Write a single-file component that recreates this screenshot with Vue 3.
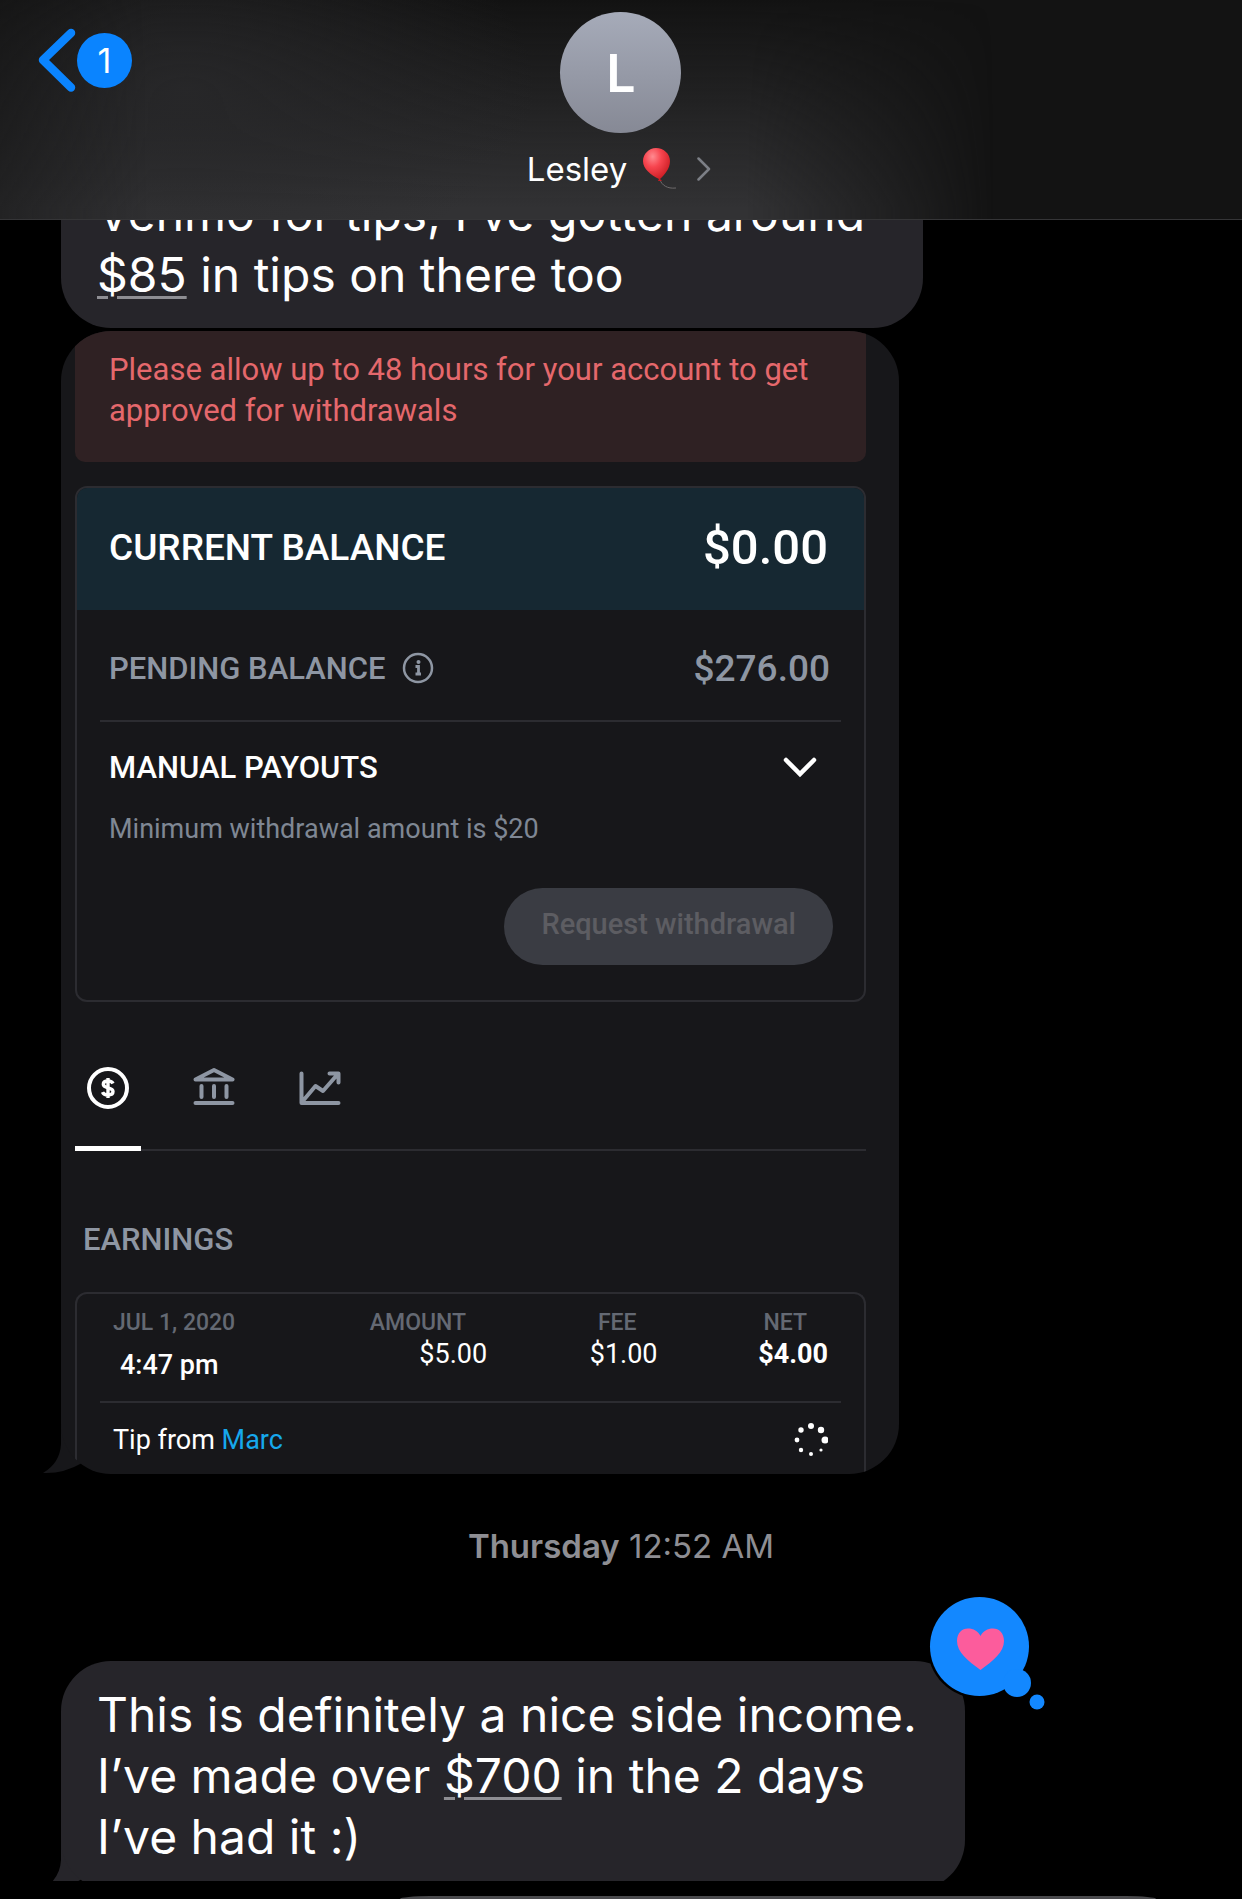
<script setup>
import { ref } from 'vue'

const activeTab = ref('earnings')

const spinnerDots = [
  { x: 17, y: 3, r: 3 },
  { x: 27, y: 7, r: 3.2 },
  { x: 31, y: 17, r: 3.5 },
  { x: 27, y: 27, r: 1.6 },
  { x: 17, y: 31, r: 2 },
  { x: 7, y: 27, r: 2.2 },
  { x: 3, y: 17, r: 2.4 },
  { x: 7, y: 7, r: 2.7 },
]
</script>

<template>
  <div class="screen">
    <header class="top-bar">
      <button class="back" type="button" aria-label="Back, 1 unread">
        <svg width="38" height="64" viewBox="0 0 38 64" fill="none">
          <path d="M33 5L5 32l28 27.500" stroke="#0a84ff" stroke-width="8.500" stroke-linecap="round" stroke-linejoin="round" />
        </svg>
        <span class="badge">1</span>
      </button>
      <button class="contact" type="button">
        <span class="avatar">L</span>
        <span class="contact-name">
          Lesley
          <svg width="34" height="44" viewBox="0 0 34 44" aria-hidden="true">
            <defs>
              <radialGradient id="balloon" cx="0.36" cy="0.26" r="0.8">
                <stop offset="0" stop-color="#ff8a90" />
                <stop offset="0.4" stop-color="#f7454f" />
                <stop offset="1" stop-color="#c4161c" />
              </radialGradient>
            </defs>
            <path d="M17 33c2 5 7 9 16 8" fill="none" stroke="#6d6a6b" stroke-width="1" />
            <path d="M13 1c8 0 14 6 14 13 0 8-6 14-10 18l2 2h-4l1-2C8 28 0 22 0 14 0 7 6 1 13 1z" fill="url(#balloon)" />
          </svg>
          <svg class="chevron" width="14" height="24" viewBox="0 0 14 24" fill="none" aria-hidden="true">
            <path d="M1.500 1.500L12 12 1.500 22.500" stroke="#7c7f86" stroke-width="2.500" stroke-linecap="round" stroke-linejoin="round" />
          </svg>
        </span>
      </button>
    </header>

    <main class="thread">
      <p class="bubble first">Venmo for tips, I’ve gotten around <a href="#">$85</a> in tips on there too</p>

      <div class="shot">
        <svg class="tail" width="50" height="56" viewBox="0 0 50 56" aria-hidden="true">
          <path d="M18 0v26q-1 19-18 29q20 1 39-10L50 0z" fill="#17171a" />
        </svg>
        <div class="shot-body">
          <p class="alert">Please allow up to 48 hours for your account to get approved for withdrawals</p>

          <section class="card">
            <div class="current">
              <h2>CURRENT BALANCE</h2>
              <strong>$0.00</strong>
            </div>
            <div class="card-body">
              <div class="pending">
                <span class="pending-label">
                  PENDING BALANCE
                  <svg width="32" height="32" viewBox="0 0 32 32" fill="none" aria-hidden="true">
                    <circle cx="16" cy="16" r="14" stroke="#8e96a3" stroke-width="2.500" />
                    <circle cx="16.500" cy="10" r="2" fill="#8e96a3" />
                    <path d="M13.500 14.500h3v7M13.500 22h5.500" stroke="#8e96a3" stroke-width="2.800" />
                  </svg>
                </span>
                <strong>$276.00</strong>
              </div>
              <button class="payouts" type="button">
                MANUAL PAYOUTS
                <svg width="34" height="22" viewBox="0 0 34 22" fill="none" aria-hidden="true">
                  <path d="M3 3l14 14L31 3" stroke="#fff" stroke-width="4.500" stroke-linecap="round" />
                </svg>
              </button>
              <p class="minimum">Minimum withdrawal amount is $20</p>
              <button class="withdraw" type="button" disabled>Request withdrawal</button>
            </div>
          </section>

          <nav class="tabs">
            <button type="button" aria-label="Earnings" :class="{ active: activeTab === 'earnings' }" @click="activeTab = 'earnings'">
              <svg width="42" height="42" viewBox="0 0 42 42" fill="none" stroke="currentColor">
                <circle cx="21" cy="21" r="19" stroke-width="4" />
                <path d="M26 16.500c-.8-1.800-2.600-2.500-5-2.500-2.800 0-4.700 1.100-4.700 3.300 0 4.800 9.700 2.400 9.700 7.200 0 2.300-2 3.500-5 3.500-2.700 0-4.700-.9-5.500-2.900M21 11v20" stroke-width="3.400" />
              </svg>
            </button>
            <button type="button" aria-label="Bank" :class="{ active: activeTab === 'bank' }" @click="activeTab = 'bank'">
              <svg width="42" height="42" viewBox="0 0 42 42" fill="none" stroke="currentColor" stroke-width="4" stroke-linecap="round" stroke-linejoin="round">
                <path d="M2.500 36h37M2.500 12.500L21 3l18.500 9.500z" />
                <path d="M8.500 19v11M21 19v11M33.500 19v11" />
              </svg>
            </button>
            <button type="button" aria-label="Statistics" :class="{ active: activeTab === 'stats' }" @click="activeTab = 'stats'">
              <svg width="42" height="42" viewBox="0 0 42 42" fill="none" stroke="currentColor" stroke-width="4" stroke-linecap="round" stroke-linejoin="round">
                <path d="M2.500 6.500V36h37M3 35l13.500-16 7.500 5L38 8M30.500 6.500h9v9" />
              </svg>
            </button>
          </nav>

          <h3 class="earnings-title">EARNINGS</h3>
          <section class="card earnings">
            <table>
              <thead>
                <tr>
                  <th scope="col" class="date">JUL 1, 2020</th>
                  <th scope="col">AMOUNT</th>
                  <th scope="col">FEE</th>
                  <th scope="col">NET</th>
                </tr>
              </thead>
              <tbody>
                <tr>
                  <td class="time">4:47 pm</td>
                  <td>$5.00</td>
                  <td>$1.00</td>
                  <td class="net">$4.00</td>
                </tr>
              </tbody>
            </table>
            <div class="tip">
              <span>Tip from <a href="#">Marc</a></span>
              <svg width="34" height="34" viewBox="0 0 34 34" fill="#fff" aria-label="Pending">
                <circle v-for="dot in spinnerDots" :key="`${dot.x}-${dot.y}`" :cx="dot.x" :cy="dot.y" :r="dot.r" />
              </svg>
            </div>
          </section>
        </div>
      </div>

      <p class="timestamp"><b>Thursday</b> 12:52 AM</p>

      <div class="clip">
        <div class="loved">
          <svg class="tail" width="50" height="56" viewBox="0 0 50 56" aria-hidden="true">
            <path d="M18 0v26q-1 19-18 29q20 1 39-10L50 0z" fill="#26252a" />
          </svg>
          <p class="bubble">This is definitely a nice side income. I’ve made over <a href="#">$700</a> in the 2 days <br />I’ve had it :)</p>
          <svg class="reaction" width="118" height="116" viewBox="0 0 118 116" role="img" aria-label="Loved">
            <circle cx="51.500" cy="51.500" r="52" fill="#000" />
            <g fill="#1388ff">
              <circle cx="51.500" cy="51.500" r="49.500" />
              <circle cx="89" cy="88" r="14" />
              <circle cx="109" cy="107" r="7.500" />
            </g>
            <path d="M52.500 75C40 66 29 57 29 46c0-8 5-12.500 11-12.500 5.500 0 10 2.500 12.500 7.500C55 36 59.500 33.500 65 33.500 71 33.500 76 38 76 46c0 11-11 20-23.500 29z" fill="#fc5c9c" />
          </svg>
        </div>
      </div>
      <div class="composer-edge"></div>
    </main>
  </div>
</template>

<style>
body {
  background: #000;
}
</style>

<style scoped>
.screen {
  background: #000;
  color: #fff;
  font-family: Inter, "Liberation Sans", sans-serif;
  overflow: hidden;
}
p,
h2,
h3 {
  margin: 0;
  font-weight: 400;
}
button {
  padding: 0;
  border: 0;
  background: none;
  color: inherit;
  font: inherit;
}
svg {
  display: block;
  flex: none;
}

.top-bar {
  position: relative;
  z-index: 2;
  display: grid;
  grid-template-columns: 1fr auto 1fr;
  align-items: start;
  height: 219px;
  border-bottom: 1px solid #353537;
  background: #131313;
}
.top-bar::before {
  content: "";
  position: absolute;
  inset: 0;
  z-index: -1;
  background:
    radial-gradient(ellipse 28% 90% at 15% 40%, #29292bcc, #29292b00),
    linear-gradient(#32323400, #323234 95%);
  mask-image: linear-gradient(90deg, #0008, #000 12%, #000 60%, #0007 71%, #0000 80%);
}
.back {
  display: flex;
  align-items: center;
  gap: 1px;
  justify-self: start;
  margin: 28px 0 0 38px;
}
.badge {
  width: 55px;
  border-radius: 50%;
  background: #0a84ff;
  font-size: 34px;
  line-height: 55px;
}
.contact {
  display: flex;
  flex-direction: column;
  align-items: center;
  gap: 14px;
  margin-top: 12px;
}
.avatar {
  width: 121px;
  height: 121px;
  border-radius: 50%;
  background: linear-gradient(#a6abb9, #868995);
  font-size: 52px;
  font-weight: 600;
  line-height: 123px;
}
.contact-name {
  display: flex;
  align-items: center;
  gap: 16px;
  font-size: 33px;
  line-height: 44px;
}
.chevron {
  margin: 0 4px 0 4px;
}

.thread {
  display: flex;
  flex-direction: column;
  align-items: flex-start;
  margin-top: -60px;
  padding-left: 61px;
}
.bubble {
  box-sizing: border-box;
  max-width: 904px;
  padding: 23px 24px 23px 36px;
  border-radius: 50px;
  background: #26252a;
  font-size: 48px;
  line-height: 61px;
}
.bubble a {
  color: inherit;
  text-decoration: underline 3px #8e8e93;
  text-underline-offset: 4px;
}
.first {
  width: 862px;
}

.shot {
  position: relative;
  isolation: isolate;
  width: 838px;
  max-width: 100%;
  margin-top: 3px;
  font-family: Roboto, "Liberation Sans", sans-serif;
}
.tail {
  position: absolute;
  left: -18px;
  bottom: 0;
  z-index: -1;
}
.shot-body {
  padding: 0 33px 0 14px;
  border-radius: 50px;
  background: #17171a;
  overflow: hidden;
}
.alert {
  padding: 18px 34px 31px;
  border-radius: 0 0 10px 10px;
  background: #2f2123;
  color: #e5686c;
  font-size: 31px;
  line-height: 41px;
}
.card {
  margin-top: 24px;
  border: 2px solid #2c2c31;
  border-radius: 12px;
}
.current,
.pending,
.payouts,
.tip {
  display: flex;
  align-items: center;
  justify-content: space-between;
}
.current {
  height: 118px;
  padding: 0 36px 4px 32px;
  border-radius: 10px 10px 0 0;
  background: #162832;
}
.current h2 {
  font-size: 37px;
  font-weight: 500;
}
.current strong {
  font-size: 49px;
  font-weight: 500;
}
.card-body {
  display: flex;
  flex-direction: column;
  padding: 0 23px 35px;
}
.pending {
  height: 104px;
  padding: 6px 11px 0 9px;
  border-bottom: 2px solid #2c2c31;
  color: #8e96a3;
  font-size: 31px;
  font-weight: 500;
}
.pending-label {
  display: flex;
  align-items: center;
  gap: 16px;
}
.pending strong {
  font-size: 37px;
  font-weight: 500;
}
.payouts {
  margin-top: 28px;
  padding: 0 24px 0 9px;
  font-size: 31px;
  font-weight: 500;
  line-height: 36px;
}
.minimum {
  margin-top: 27px;
  padding-left: 9px;
  color: #7f8794;
  font-size: 27px;
  line-height: 32px;
}
.withdraw {
  align-self: flex-end;
  height: 77px;
  margin: 43px 8px 0 0;
  padding: 0 37px 6px;
  border-radius: 40px;
  background: #3a3c43;
  color: #5d5d62;
  font-size: 29px;
  font-weight: 500;
}

.tabs {
  display: flex;
  gap: 40px;
  margin-top: 22px;
  border-bottom: 2px solid #2c2c31;
}
.tabs button {
  box-sizing: border-box;
  display: flex;
  align-items: center;
  justify-content: center;
  width: 66px;
  height: 127px;
  margin-bottom: -2px;
  padding-top: 5px;
  border-bottom: 5px solid transparent;
  color: #8e96a3;
}
.tabs .active {
  border-color: #fff;
  color: #fff;
}

.earnings-title {
  margin-top: 71px;
  padding-left: 8px;
  color: #8e96a3;
  font-size: 31px;
  font-weight: 500;
  line-height: 36px;
}
.earnings {
  margin-top: 34px;
  padding: 14px 23px 17px;
  border-bottom: 0;
  border-radius: 12px 12px 0 0;
}
table {
  width: 100%;
  border-collapse: collapse;
  table-layout: fixed;
}
th {
  box-sizing: border-box;
  width: 23%;
  padding: 0 34px 0 0;
  color: #646973;
  font-size: 23px;
  font-weight: 500;
  line-height: 30px;
  text-align: right;
}
th.date {
  width: 31%;
  padding: 0 0 0 13px;
  text-align: left;
}
td {
  height: 43px;
  padding: 0 13px 0 0;
  font-size: 27px;
  line-height: 32px;
  text-align: right;
  vertical-align: top;
}
td.time {
  padding: 0 0 0 20px;
  font-weight: 500;
  text-align: left;
  vertical-align: bottom;
}
td.net {
  font-weight: 700;
}
.tip {
  margin-top: 20px;
  padding: 20px 13px 0 13px;
  border-top: 2px solid #2c2c31;
  font-size: 27px;
  line-height: 32px;
}
.tip a {
  color: #16a8ec;
  text-decoration: none;
}

.timestamp {
  align-self: stretch;
  margin: 52px 61px 0 0;
  color: #8e8e93;
  font-size: 33px;
  line-height: 40px;
  text-align: center;
}
.timestamp b {
  font-weight: 600;
}
.clip {
  align-self: stretch;
  height: 315px;
  margin-left: -61px;
  padding-left: 61px;
  overflow: hidden;
}
.loved {
  position: relative;
  isolation: isolate;
  width: 904px;
  max-width: 100%;
  margin-top: 95px;
}
.reaction {
  position: absolute;
  top: -66px;
  right: -81px;
}
.composer-edge {
  align-self: stretch;
  height: 3px;
  margin: 15px 86px 0 339px;
  border-radius: 30px 30px 0 0 / 3px 3px 0 0;
  background: #4a4a4d;
}
</style>
